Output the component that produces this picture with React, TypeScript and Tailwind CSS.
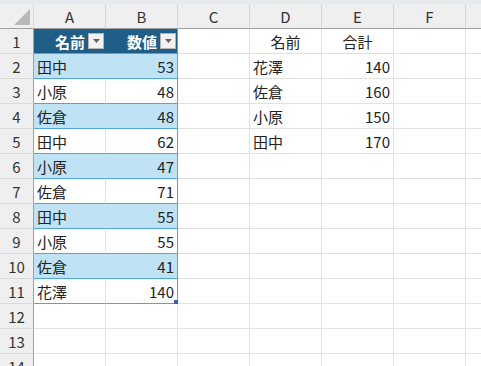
import React from "react";

const font = { fontFamily: '"Noto Sans CJK JP", "Noto Sans", sans-serif' };

const cols = ["A", "B", "C", "D", "E", "F", "G"];

// table data rows 2..11
const tableRows: [string, number][] = [
  ["田中", 53],
  ["小原", 48],
  ["佐倉", 48],
  ["田中", 62],
  ["小原", 47],
  ["佐倉", 71],
  ["田中", 55],
  ["小原", 55],
  ["佐倉", 41],
  ["花澤", 140],
];

const summary: [string, number][] = [
  ["花澤", 140],
  ["佐倉", 160],
  ["小原", 150],
  ["田中", 170],
];

function FilterButton() {
  return (
    <div className="w-[16px] h-[16px] shrink-0 bg-[#f2f2f2] border border-[#b4b4b4] flex items-center justify-center">
      <svg width="7" height="4" viewBox="0 0 7 4">
        <path d="M0 0h7L3.5 4z" fill="#666666" />
      </svg>
    </div>
  );
}

function Cell({
  className = "",
  children,
}: {
  className?: string;
  children?: React.ReactNode;
}) {
  return (
    <div
      className={
        "w-[72px] h-[25px] shrink-0 border-r border-b flex items-center px-[3px] text-[15px] text-[#222] leading-none " +
        className
      }
    >
      {children}
    </div>
  );
}

function RowHeader({ n }: { n: number }) {
  return (
    <div className="w-[34px] h-[25px] shrink-0 bg-[#efefef] border-r border-r-[#a0a0a0] border-b border-b-[#dadada] flex items-center justify-center text-[15px] text-[#333] leading-none">
      {n}
    </div>
  );
}

export default function App() {
  const rows: React.ReactNode[] = [];

  for (let r = 1; r <= 14; r++) {
    const cells: React.ReactNode[] = [];

    // A and B (table)
    if (r === 1) {
      cells.push(
        <Cell key="a" className="bg-[#1f5f87] border-r-[#1f5f87] border-b-[#4ea6dc] justify-end gap-[3px] pr-[1px]">
          <span className="text-white font-bold">名前</span>
          <FilterButton />
        </Cell>
      );
      cells.push(
        <Cell key="b" className="bg-[#1f5f87] border-r-[#4ea6dc] border-b-[#4ea6dc] justify-end gap-[3px] pr-[1px]">
          <span className="text-white font-bold">数値</span>
          <FilterButton />
        </Cell>
      );
    } else if (r <= 11) {
      const [name, val] = tableRows[r - 2];
      const band = r % 2 === 0;
      cells.push(
        <Cell
          key="a"
          className={
            (band ? "bg-[#bfe3f5] border-r-[#bfe3f5]" : "bg-white border-r-[#e1e1e1]") +
            " border-b-[#4ea6dc]"
          }
        >
          {name}
        </Cell>
      );
      cells.push(
        <Cell
          key="b"
          className={
            (band ? "bg-[#bfe3f5]" : "bg-white") +
            " border-r-[#4ea6dc] border-b-[#4ea6dc] justify-end relative"
          }
        >
          {val}
          {r === 11 && (
            <span className="absolute right-[-1px] bottom-[-1px] w-[4px] h-[4px] bg-[#3a5fb0]" />
          )}
        </Cell>
      );
    } else {
      cells.push(<Cell key="a" className="border-r-[#e1e1e1] border-b-[#e1e1e1]" />);
      cells.push(<Cell key="b" className="border-r-[#e1e1e1] border-b-[#e1e1e1]" />);
    }

    // C
    cells.push(<Cell key="c" className="border-r-[#e1e1e1] border-b-[#e1e1e1]" />);

    // D and E (summary)
    if (r === 1) {
      cells.push(
        <Cell key="d" className="border-r-[#e1e1e1] border-b-[#e1e1e1] justify-center">
          名前
        </Cell>
      );
      cells.push(
        <Cell key="e" className="border-r-[#e1e1e1] border-b-[#e1e1e1] justify-center">
          合計
        </Cell>
      );
    } else if (r <= 5) {
      const [name, val] = summary[r - 2];
      cells.push(
        <Cell key="d" className="border-r-[#e1e1e1] border-b-[#e1e1e1]">
          {name}
        </Cell>
      );
      cells.push(
        <Cell key="e" className="border-r-[#e1e1e1] border-b-[#e1e1e1] justify-end">
          {val}
        </Cell>
      );
    } else {
      cells.push(<Cell key="d" className="border-r-[#e1e1e1] border-b-[#e1e1e1]" />);
      cells.push(<Cell key="e" className="border-r-[#e1e1e1] border-b-[#e1e1e1]" />);
    }

    cells.push(<Cell key="f" className="border-r-[#e1e1e1] border-b-[#e1e1e1]" />);
    cells.push(<Cell key="g" className="border-r-[#e1e1e1] border-b-[#e1e1e1]" />);

    rows.push(
      <div key={r} className="flex">
        <RowHeader n={r} />
        {cells}
      </div>
    );
  }

  return (
    <div className="w-[481px] h-[366px] overflow-hidden bg-white" style={font}>
      {/* top strip */}
      <div className="h-[4px] bg-[#e8ebee]" />
      {/* column headers */}
      <div className="flex">
        <div className="w-[34px] h-[25px] shrink-0 bg-[#efefef] border-r border-r-[#dadada] border-b border-b-[#a0a0a0] flex items-end justify-end pr-[3px] pb-[3px]">
          <svg width="16" height="16" viewBox="0 0 16 16">
            <path d="M16 0V16H0z" fill="#b9b9b9" />
          </svg>
        </div>
        {cols.map((c) => (
          <div
            key={c}
            className="w-[72px] h-[25px] shrink-0 bg-[#efefef] border-r border-r-[#d4d4d4] border-b border-b-[#a0a0a0] flex items-center justify-center text-[15px] text-[#333] leading-none"
          >
            {c === "G" ? "" : c}
          </div>
        ))}
      </div>
      {rows}
    </div>
  );
}
